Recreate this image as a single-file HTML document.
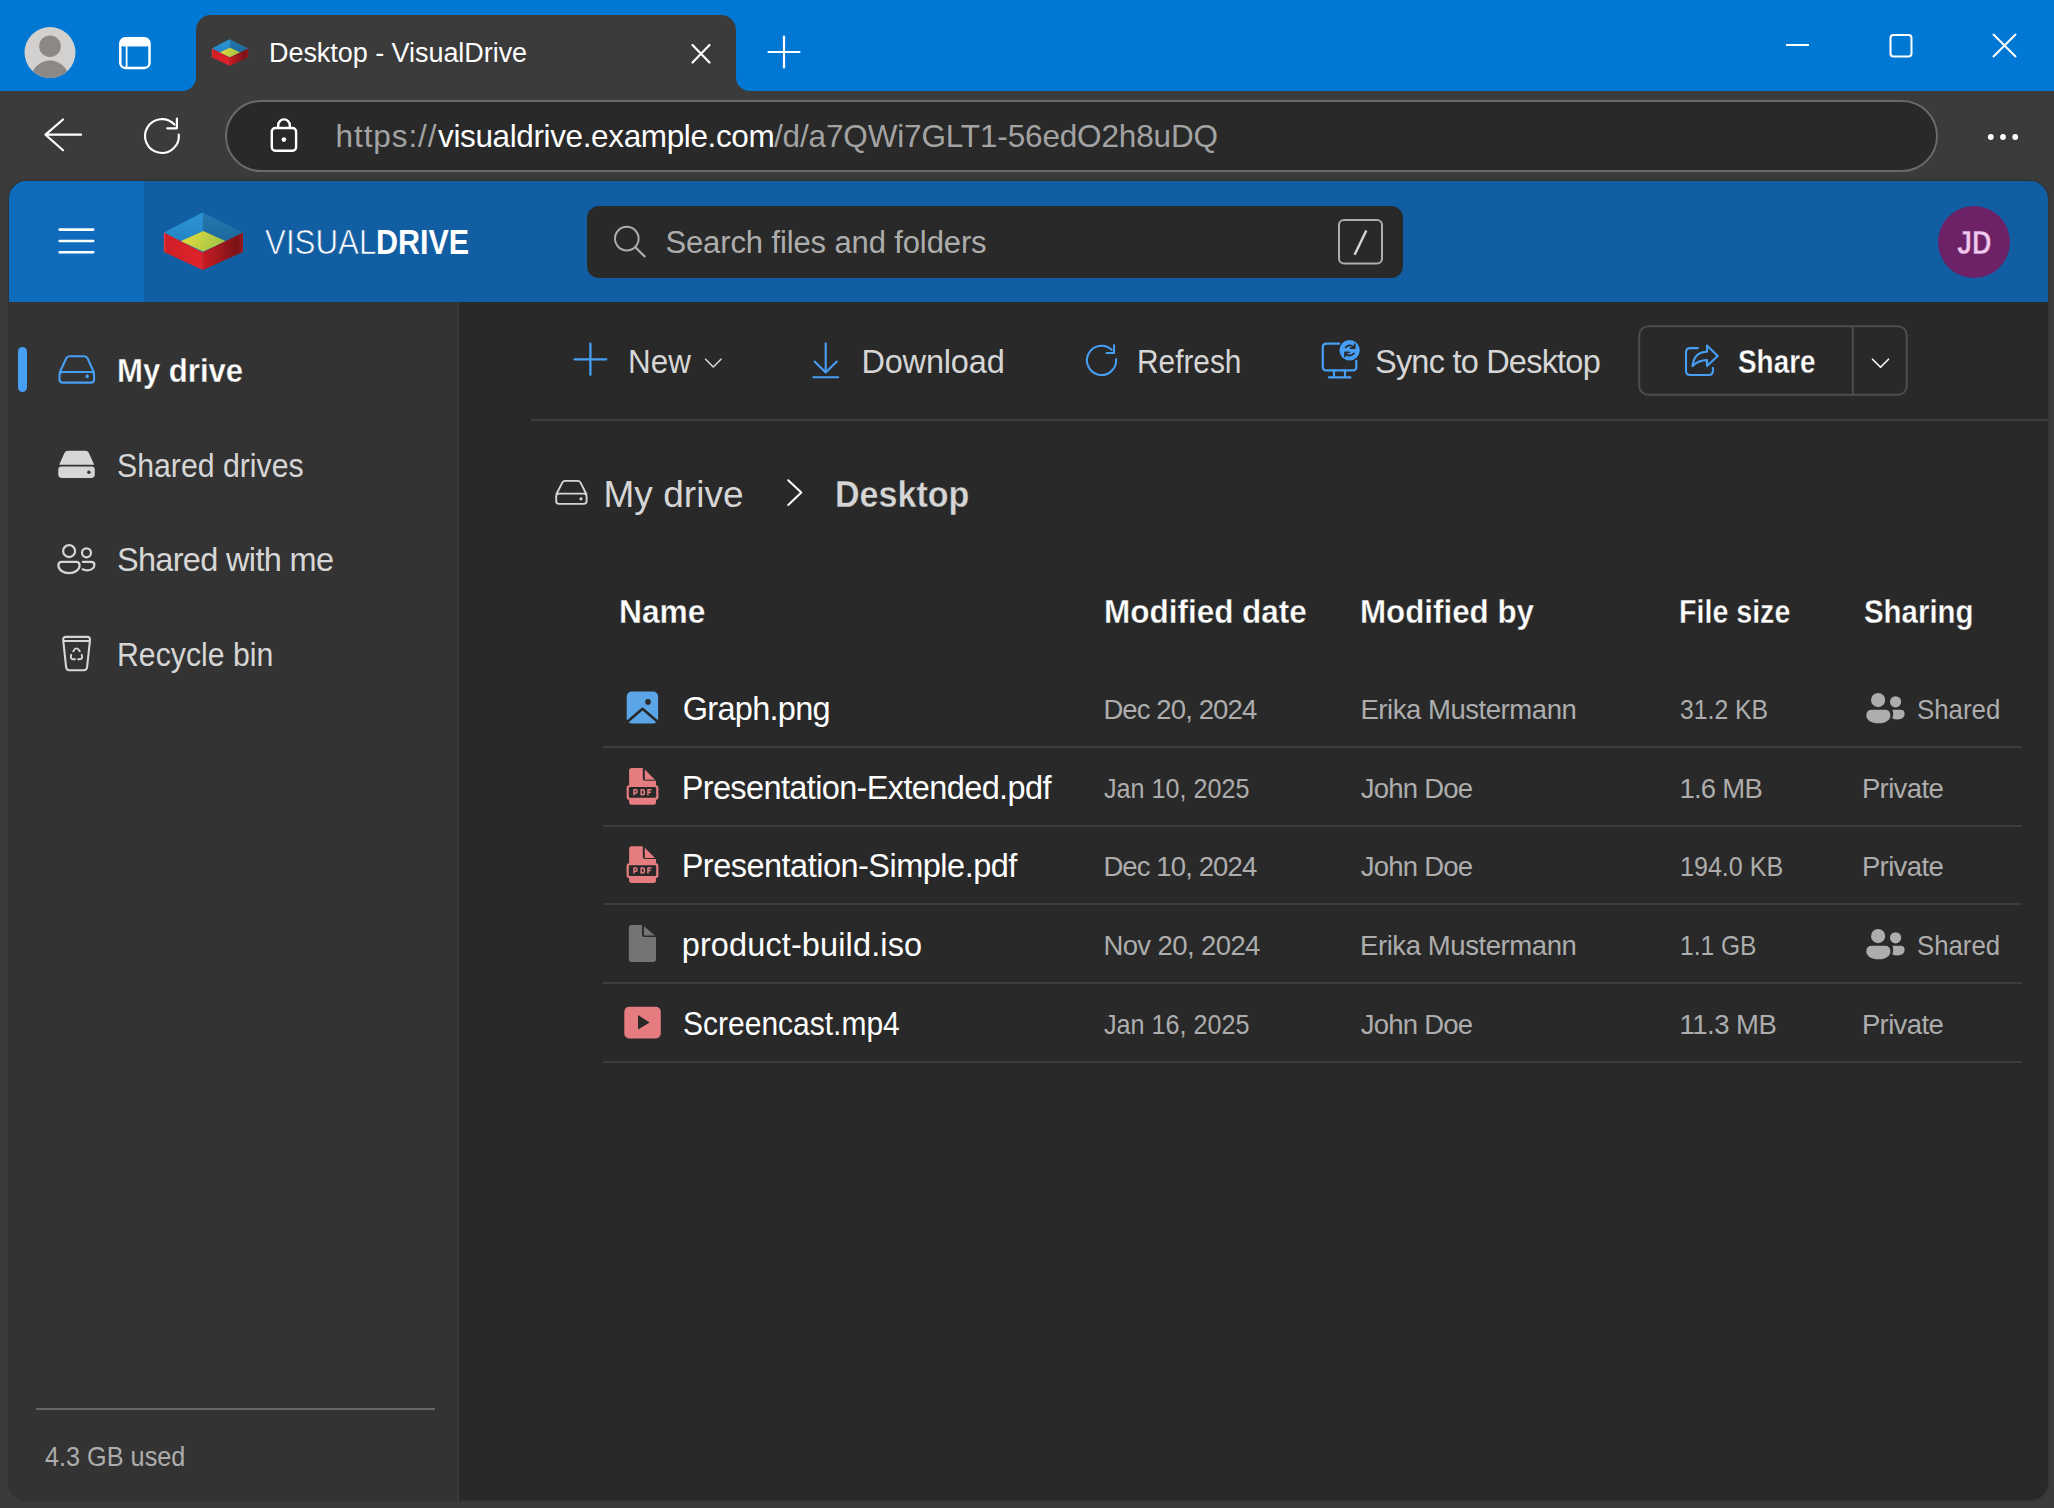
<!DOCTYPE html>
<html><head><meta charset="utf-8"><title>Desktop - VisualDrive</title><style>
html,body{margin:0;padding:0;width:2054px;height:1508px;overflow:hidden;background:#3b3b3b;font-family:"Liberation Sans",sans-serif;}
.b{position:absolute;}
.t{position:absolute;white-space:pre;font-family:"Liberation Sans",sans-serif;transform-origin:0 0;}
svg.ic{position:absolute;left:0;top:0;}
</style></head><body>
<div class=b style="left:0;top:0;width:2054px;height:91px;background:#0078d4"></div>
<div class=b style="left:196px;top:15px;width:540px;height:76px;background:#3b3b3b;border-radius:15px 15px 0 0"></div>
<div class=b style="left:182px;top:77px;width:14px;height:14px;background:radial-gradient(circle at 0 0,#0078d4 13.6px,#3b3b3b 14.4px)"></div>
<div class=b style="left:736px;top:77px;width:14px;height:14px;background:radial-gradient(circle at 100% 0,#0078d4 13.6px,#3b3b3b 14.4px)"></div>
<div class=b style="left:225px;top:100px;width:1713px;height:72px;box-sizing:border-box;border:2px solid #6a6a6a;border-radius:36px;background:#292929"></div>
<div class=b style="left:9px;top:181px;width:2038.5px;height:1319px;border-radius:18px;background:#292929;box-shadow:0 0 3px rgba(0,0,0,0.35)"></div>
<div class=b style="left:9px;top:181px;width:2038.5px;height:121px;border-radius:18px 18px 0 0;background:#115ea3"></div>
<div class=b style="left:9px;top:181px;width:135px;height:121px;border-radius:18px 0 0 0;background:#0f6cbd"></div>
<div class=b style="left:9px;top:302px;width:447.7px;height:1198px;border-radius:0 0 0 18px;background:#333333"></div>
<div class=b style="left:456.7px;top:302px;width:2.2px;height:1198px;background:#3b3b3b"></div>
<div class=b style="left:587px;top:206px;width:816px;height:72px;border-radius:12px;background:#292929"></div>
<div class=b style="left:1938px;top:206px;width:72px;height:72px;border-radius:50%;background:#6d2166"></div>
<div class=b style="left:18px;top:347px;width:9px;height:45px;border-radius:4.5px;background:#479ef5"></div>
<div class=b style="left:36px;top:1408px;width:399px;height:2px;background:#666666"></div>
<div class=b style="left:531px;top:419px;width:1516.5px;height:2px;background:#3d3d3d"></div>
<div class=b style="left:603px;top:745.5px;width:1419px;height:2px;background:#3d3d3d"></div>
<div class=b style="left:603px;top:824.5px;width:1419px;height:2px;background:#3d3d3d"></div>
<div class=b style="left:603px;top:903px;width:1419px;height:2px;background:#3d3d3d"></div>
<div class=b style="left:603px;top:981.5px;width:1419px;height:2px;background:#3d3d3d"></div>
<div class=b style="left:603px;top:1060.5px;width:1419px;height:2px;background:#3d3d3d"></div>
<svg class=ic width="2054" height="1508" viewBox="0 0 2054 1508">
<defs>
<clipPath id="avc"><circle cx="50" cy="52.5" r="25.5"/></clipPath>
<linearGradient id="gy" x1="0" y1="0" x2="1" y2="0.3"><stop offset="0" stop-color="#ecdf3a"/><stop offset="1" stop-color="#a2c448"/></linearGradient>
<linearGradient id="grr" x1="0" y1="0" x2="1" y2="0"><stop offset="0" stop-color="#c81c23"/><stop offset="0.85" stop-color="#7a1317"/><stop offset="1" stop-color="#9a1a1e"/></linearGradient>
<linearGradient id="grl" x1="0" y1="0" x2="1" y2="0"><stop offset="0" stop-color="#e84048"/><stop offset="0.06" stop-color="#d01f27"/><stop offset="1" stop-color="#e0222a"/></linearGradient>
<linearGradient id="gbl" x1="0" y1="0" x2="0" y2="1"><stop offset="0" stop-color="#2c95d6"/><stop offset="1" stop-color="#1f7fbe"/></linearGradient>
<linearGradient id="gbr" x1="0" y1="0" x2="0" y2="1"><stop offset="0" stop-color="#2479b0"/><stop offset="1" stop-color="#1a6294"/></linearGradient>

</defs>
<!-- profile avatar -->
<circle cx="50" cy="52.5" r="25.5" fill="#d3d1cf"/>
<g clip-path="url(#avc)"><circle cx="50" cy="46.2" r="10.8" fill="#8c8885"/><ellipse cx="50" cy="79" rx="19" ry="18.5" fill="#8c8885"/></g>
<!-- tab actions -->
<rect x="120.3" y="38.3" width="29.2" height="29.6" rx="5" fill="none" stroke="#fff" stroke-width="2.5"/>
<rect x="120.3" y="38.3" width="29.2" height="8" rx="4" fill="#fff"/>
<rect x="120.3" y="42" width="29.2" height="4.3" fill="#fff"/>
<line x1="126.6" y1="46" x2="126.6" y2="67" stroke="#fff" stroke-width="1.8"/>
<!-- favicon -->
<g transform="translate(211.9,39.3) scale(0.458)">
<polygon points="0,20 39,0 79.2,20 39,39.9" fill="url(#gbr)"/>
<polygon points="0,20 39,0 39,39.9" fill="url(#gbl)"/>
<polygon points="16.9,28.8 39.5,18.5 62,28.8 39.5,39" fill="url(#gy)"/>
<polygon points="0,20 39,39.9 39,57.5 0,39.5" fill="url(#grl)"/>
<polygon points="39,39.9 79.2,20 79.2,39.5 39,57.5" fill="url(#grr)"/>
</g>
<!-- tab close -->
<path d="M692.5,45 L709.5,62.5 M709.5,45 L692.5,62.5" stroke="#fff" stroke-width="2.2" stroke-linecap="round"/>
<!-- new tab -->
<path d="M768.5,52 L799.5,52 M784,36.5 L784,67.5" stroke="#fff" stroke-width="2.2" stroke-linecap="round"/>
<!-- window controls -->
<line x1="1786" y1="45" x2="1809" y2="45" stroke="#fff" stroke-width="2"/>
<rect x="1890.5" y="35" width="21" height="21.5" rx="3" fill="none" stroke="#fff" stroke-width="2"/>
<path d="M1993.5,34.5 L2015.5,56.5 M2015.5,34.5 L1993.5,56.5" stroke="#fff" stroke-width="2" stroke-linecap="round"/>
<!-- back -->
<path d="M63,119.5 L45.5,134.7 L63,150.2 M45.5,134.7 L81,134.7" fill="none" stroke="#fff" stroke-width="2.2" stroke-linecap="round" stroke-linejoin="round"/>
<!-- browser refresh -->
<path d="M178.8,134.6 A16.9,16.9 0 1 1 174.4,124.6" fill="none" stroke="#fff" stroke-width="2.2" stroke-linecap="round"/>
<path d="M176.9,118.6 L176.9,128.3 L167.2,128.3" fill="none" stroke="#fff" stroke-width="2.2" stroke-linecap="round" stroke-linejoin="round"/>
<!-- lock -->
<rect x="271.8" y="128" width="24.3" height="22.7" rx="3.5" fill="none" stroke="#fff" stroke-width="2.4"/>
<path d="M278.2,128 L278.2,125.2 A5.8,5.8 0 0 1 289.8,125.2 L289.8,128" fill="none" stroke="#fff" stroke-width="2.4"/>
<circle cx="283.9" cy="139.6" r="2.3" fill="#fff"/>
<!-- more dots -->
<circle cx="1990.8" cy="137" r="2.9" fill="#fff"/><circle cx="2003" cy="137" r="2.9" fill="#fff"/><circle cx="2015.2" cy="137" r="2.9" fill="#fff"/>
<!-- hamburger -->
<path d="M59.7,229.6 L93.2,229.6 M59.7,241 L93.2,241 M59.7,252.3 L93.2,252.3" stroke="#fff" stroke-width="2.6" stroke-linecap="round"/>
<!-- header logo -->
<g transform="translate(163.8,212.5)">
<polygon points="0,20 39,0 79.2,20 39,39.9" fill="url(#gbr)"/>
<polygon points="0,20 39,0 39,39.9" fill="url(#gbl)"/>
<polygon points="16.9,28.8 39.5,18.5 62,28.8 39.5,39" fill="url(#gy)"/>
<polygon points="0,20 39,39.9 39,57.5 0,39.5" fill="url(#grl)"/>
<polygon points="39,39.9 79.2,20 79.2,39.5 39,57.5" fill="url(#grr)"/>
</g>
<!-- search icon -->
<circle cx="626.8" cy="238.6" r="11.8" fill="none" stroke="#adadad" stroke-width="2"/>
<line x1="635.3" y1="247.3" x2="644.6" y2="256.4" stroke="#adadad" stroke-width="2.2" stroke-linecap="round"/>
<!-- key box -->
<rect x="1339" y="220" width="43" height="43.5" rx="5" fill="none" stroke="#adadad" stroke-width="2"/>
<line x1="1366.3" y1="230.5" x2="1354.6" y2="254.8" stroke="#d6d6d6" stroke-width="2.4"/>
<!-- sidebar: my drive (blue outline) -->
<path d="M59.4,373 L66.3,358.3 Q67.3,356.2 69.6,356.2 L84.2,356.2 Q86.5,356.2 87.5,358.3 L94.2,373 M62.6,372 L91,372 Q94.1,372 94.1,375.1 L94.1,379.5 Q94.1,382.6 91,382.6 L62.6,382.6 Q59.5,382.6 59.5,379.5 L59.5,375.1 Q59.5,372 62.6,372 Z" fill="none" stroke="#479ef5" stroke-width="2.1" stroke-linejoin="round"/>
<circle cx="87.2" cy="376.4" r="1.8" fill="#479ef5"/>
<!-- shared drives (filled) -->
<path d="M59.2,464.8 L64.3,453.2 Q65.3,450.8 68,450.8 L85.3,450.8 Q88,450.8 89,453.2 L94.2,464.8 Z" fill="#d6d6d6"/>
<rect x="58.3" y="466.6" width="36.5" height="11.3" rx="3.3" fill="#d6d6d6"/>
<circle cx="88.9" cy="472.3" r="1.7" fill="#333333"/>
<!-- shared with me -->
<circle cx="69.1" cy="551.1" r="6" fill="none" stroke="#d6d6d6" stroke-width="2.2"/>
<circle cx="86.5" cy="552.8" r="4.5" fill="none" stroke="#d6d6d6" stroke-width="2.2"/>
<path d="M61.8,561.8 L76.2,561.8 Q79.6,561.8 79.6,565.2 C79.6,570 74.5,573.2 69,573.2 C63.5,573.2 58.4,570 58.4,565.2 Q58.4,561.8 61.8,561.8 Z" fill="none" stroke="#d6d6d6" stroke-width="2.2" stroke-linejoin="round"/>
<path d="M82.8,561.8 L91.2,561.8 Q94.4,561.8 94.4,564.8 C94.4,568.5 90.8,570.3 86.8,570.3 C85.2,570.3 83.8,569.9 82.6,569.3" fill="none" stroke="#d6d6d6" stroke-width="2.2" stroke-linecap="round" stroke-linejoin="round"/>
<!-- recycle bin -->
<path d="M65.9,636.9 L87.3,636.9 Q90.3,636.9 90,640.2 L87.1,667 Q86.8,670.3 83.7,670.3 L69.5,670.3 Q66.4,670.3 66.1,667 L63.2,640.2 Q62.9,636.9 65.9,636.9 Z M63.4,641 L89.7,641" fill="none" stroke="#d6d6d6" stroke-width="2.1" stroke-linejoin="round"/>
<path d="M73.3,651.3 Q76.4,645.5 79.8,651.3 M71.2,654.8 Q70,659.3 73.2,659.3 L75,659.3 M81.7,654.8 Q83,659.3 79.8,659.3 L78.1,659.3" fill="none" stroke="#d6d6d6" stroke-width="1.9" stroke-linecap="round"/>
<!-- toolbar: plus -->
<path d="M574.6,359.3 L606.2,359.3 M590.4,343.7 L590.4,374.8" stroke="#479ef5" stroke-width="2.3" stroke-linecap="round"/>
<path d="M705.6,359.2 L713.3,367 L721,359.2" fill="none" stroke="#d6d6d6" stroke-width="1.6" stroke-linecap="round" stroke-linejoin="round"/>
<!-- download -->
<path d="M825.7,343.3 L825.7,372.5 M814.6,361.5 L825.7,372.6 L836.8,361.5 M813.3,377.2 L838.2,377.2" fill="none" stroke="#479ef5" stroke-width="2.1" stroke-linecap="round" stroke-linejoin="round"/>
<!-- refresh -->
<path d="M1116.1,359.4 A14.6,14.6 0 1 1 1111.6,349.8" fill="none" stroke="#479ef5" stroke-width="2.1" stroke-linecap="round"/>
<path d="M1114,345.4 L1114,353 L1106.6,353" fill="none" stroke="#479ef5" stroke-width="2.1" stroke-linecap="round" stroke-linejoin="round"/>
<!-- sync -->
<path d="M1339.2,343.6 L1326.5,343.6 Q1322.8,343.6 1322.8,347.3 L1322.8,366.7 Q1322.8,370.4 1326.5,370.4 L1352.6,370.4 Q1356.3,370.4 1356.3,366.7 L1356.3,360.8" fill="none" stroke="#479ef5" stroke-width="2.2" stroke-linecap="round"/>
<path d="M1334,370.4 L1334,377.4 M1345,370.4 L1345,377.4 M1329,377.4 L1350.4,377.4" fill="none" stroke="#479ef5" stroke-width="2.2" stroke-linecap="round"/>
<circle cx="1349.6" cy="350.3" r="10.2" fill="#479ef5"/>
<path d="M1345.6,347.3 Q1349.5,343.6 1353.6,346.8 M1354.7,344.2 L1354.7,348.2 L1350.6,348.2 M1354,353.4 Q1350,357.2 1346,354.2 M1345,352.4 L1345,356.5 M1345,352.4 L1349.1,352.4" fill="none" stroke="#292929" stroke-width="1.7" stroke-linecap="round" stroke-linejoin="round"/>
<!-- share button -->
<rect x="1639.2" y="326.2" width="267.6" height="68.6" rx="9" fill="none" stroke="#4d4d4d" stroke-width="2"/>
<line x1="1852.8" y1="326.2" x2="1852.8" y2="394.8" stroke="#4d4d4d" stroke-width="2"/>
<path d="M1697.8,348.1 L1690.2,348.1 Q1686,348.1 1686,352.3 L1686,370.8 Q1686,375 1690.2,375 L1708.7,375 Q1712.9,375 1712.9,370.8 L1712.9,367.9" fill="none" stroke="#479ef5" stroke-width="2.1" stroke-linecap="round"/>
<path d="M1707,345.6 L1717.7,355.9 L1707,365.9 L1707,360.1 C1700.5,360.1 1696.5,362 1692.5,365.9 C1693.5,357 1698.5,351.8 1707,351.7 Z" fill="none" stroke="#479ef5" stroke-width="2.1" stroke-linejoin="round"/>
<path d="M1872.5,359.2 L1880.5,367.2 L1888.5,359.2" fill="none" stroke="#ffffff" stroke-width="1.6" stroke-linecap="round" stroke-linejoin="round"/>
<!-- breadcrumb drive -->
<path d="M556.2,494.5 L562.3,482.6 Q563.2,480.9 565.2,480.9 L577.6,480.9 Q579.6,480.9 580.5,482.6 L586.6,494.5 M559,493.6 L583.8,493.6 Q586.6,493.6 586.6,496.4 L586.6,501.1 Q586.6,503.9 583.8,503.9 L559,503.9 Q556.2,503.9 556.2,501.1 L556.2,496.4 Q556.2,493.6 559,493.6 Z" fill="none" stroke="#d6d6d6" stroke-width="1.9" stroke-linejoin="round"/>
<circle cx="581" cy="498.8" r="1.6" fill="#d6d6d6"/>
<path d="M788.2,480.3 L801.3,492.6 L788.2,505" fill="none" stroke="#ffffff" stroke-width="2" stroke-linecap="round" stroke-linejoin="round"/>
<!-- image icon -->
<rect x="626.7" y="691.6" width="31.4" height="31.9" rx="5" fill="#59a5e6"/>
<circle cx="648" cy="701.9" r="2.8" fill="#292929"/>
<path d="M626.5,722.6 L642.5,708.8 L658.3,722.3" fill="none" stroke="#292929" stroke-width="2.6" stroke-linejoin="round"/>
<!-- pdf icons -->
<g>
<path d="M631.6,768.1 L642.8,768.1 L642.8,778.3 Q642.8,780.8 645.3,780.8 L656,780.8 L656,784.9 L629.1,784.9 L629.1,770.6 Q629.1,768.1 631.6,768.1 Z" fill="#e57c80"/>
<polygon points="644.8,769.5 655,779.8 644.8,779.8" fill="#e57c80"/>
<path d="M629.1,799.9 L656,799.9 L656,802.2 Q656,804.7 653.5,804.7 L631.6,804.7 Q629.1,804.7 629.1,802.2 Z" fill="#e57c80"/>
<rect x="627.7" y="786" width="29.6" height="12.9" rx="2.2" fill="none" stroke="#e57c80" stroke-width="2.2"/>
<path d="M634,794.85 L634,789.75 L636,789.75 Q637.05,789.75 637.05,791.45 Q637.05,793.15 636,793.15 L634,793.15 M641.15,789.75 L642.5,789.75 Q644.45,789.75 644.45,792.3 Q644.45,794.85 642.5,794.85 L641.15,794.85 Z M647.95,794.85 L647.95,789.75 L650.95,789.75 M647.95,792.3 L650.4,792.3" fill="none" stroke="#e57c80" stroke-width="1.5" stroke-linecap="round" stroke-linejoin="round"/>
</g>
<g transform="translate(0,78.2)">
<path d="M631.6,768.1 L642.8,768.1 L642.8,778.3 Q642.8,780.8 645.3,780.8 L656,780.8 L656,784.9 L629.1,784.9 L629.1,770.6 Q629.1,768.1 631.6,768.1 Z" fill="#e57c80"/>
<polygon points="644.8,769.5 655,779.8 644.8,779.8" fill="#e57c80"/>
<path d="M629.1,799.9 L656,799.9 L656,802.2 Q656,804.7 653.5,804.7 L631.6,804.7 Q629.1,804.7 629.1,802.2 Z" fill="#e57c80"/>
<rect x="627.7" y="786" width="29.6" height="12.9" rx="2.2" fill="none" stroke="#e57c80" stroke-width="2.2"/>
<path d="M634,794.85 L634,789.75 L636,789.75 Q637.05,789.75 637.05,791.45 Q637.05,793.15 636,793.15 L634,793.15 M641.15,789.75 L642.5,789.75 Q644.45,789.75 644.45,792.3 Q644.45,794.85 642.5,794.85 L641.15,794.85 Z M647.95,794.85 L647.95,789.75 L650.95,789.75 M647.95,792.3 L650.4,792.3" fill="none" stroke="#e57c80" stroke-width="1.5" stroke-linecap="round" stroke-linejoin="round"/>
</g>
<!-- file icon -->
<path d="M631.3,925 L642,925 L642,934.5 Q642,937 644.5,937 L656,937 L656,959.3 Q656,961.9 653.4,961.9 L631.4,961.9 Q628.8,961.9 628.8,959.3 L628.8,927.5 Q628.8,925 631.3,925 Z" fill="#747474"/>
<polygon points="644,926.3 655,935.5 644,935.5" fill="#747474"/>
<!-- video icon -->
<rect x="624.3" y="1006.7" width="36.5" height="31.7" rx="5" fill="#e57c80"/>
<polygon points="638,1015 649.7,1022.4 638,1029.6" fill="#292929"/>
<!-- people icons -->
<g fill="#adadad">
<circle cx="1878.1" cy="700.1" r="7.1"/>
<path d="M1866.3,715.4 Q1866.3,709.8 1872,709.8 L1885,709.8 Q1890.4,709.8 1890.4,715.4 C1890.4,720.5 1885,723.3 1878.3,723.3 C1871.5,723.3 1866.3,720.5 1866.3,715 Z"/>
<circle cx="1895.6" cy="701.8" r="5.6"/>
<path d="M1892.4,709.7 L1900.6,709.7 Q1904.6,709.7 1904.6,713.7 C1904.6,717.5 1901.5,719.4 1897.5,719.4 C1895.5,719.4 1893.8,719 1892.2,718.2 C1892.9,717 1893.2,715.8 1893.2,714.3 C1893.2,712.5 1892.9,711 1892.4,709.7 Z"/>
</g>
<g fill="#adadad" transform="translate(0,236)">
<circle cx="1878.1" cy="700.1" r="7.1"/>
<path d="M1866.3,715.4 Q1866.3,709.8 1872,709.8 L1885,709.8 Q1890.4,709.8 1890.4,715.4 C1890.4,720.5 1885,723.3 1878.3,723.3 C1871.5,723.3 1866.3,720.5 1866.3,715 Z"/>
<circle cx="1895.6" cy="701.8" r="5.6"/>
<path d="M1892.4,709.7 L1900.6,709.7 Q1904.6,709.7 1904.6,713.7 C1904.6,717.5 1901.5,719.4 1897.5,719.4 C1895.5,719.4 1893.8,719 1892.2,718.2 C1892.9,717 1893.2,715.8 1893.2,714.3 C1893.2,712.5 1892.9,711 1892.4,709.7 Z"/>
</g>
</svg>

<span class=t style="left:269px;top:40px;font-size:27px;line-height:27px;font-weight:400;color:#ffffff;letter-spacing:-0.05px;">Desktop - VisualDrive</span>
<span class=t style="left:335.5px;top:121px;font-size:31.5px;line-height:31.5px;font-weight:400;color:#a3a3a3;letter-spacing:0.93px;">https://</span>
<span class=t style="left:438px;top:121px;font-size:31.5px;line-height:31.5px;font-weight:400;color:#ffffff;letter-spacing:-0.37px;">visualdrive.example.com</span>
<span class=t style="left:774px;top:121px;font-size:31.5px;line-height:31.5px;font-weight:400;color:#a3a3a3;letter-spacing:-0.15px;">/d/a7QWi7GLT1-56edO2h8uDQ</span>
<span class=t style="left:265px;top:224px;font-size:35px;line-height:35px;font-weight:400;color:#ffffff;transform:scaleX(0.8949);-webkit-text-stroke:0.7px #115ea3;">VISUAL</span>
<span class=t style="left:376.06px;top:224px;font-size:35px;line-height:35px;font-weight:700;color:#ffffff;transform:scaleX(0.8705);">DRIVE</span>
<span class=t style="left:665.4px;top:227px;font-size:31px;line-height:31px;font-weight:400;color:#adadad;letter-spacing:-0.12px;">Search files and folders</span>
<span class=t style="left:1956.8px;top:227px;font-size:32.5px;line-height:32.5px;font-weight:700;color:#f1c7ef;transform:scaleX(0.8326);-webkit-text-stroke:0.4px #6d2166;">JD</span>
<span class=t style="left:116.79px;top:355px;font-size:32.5px;line-height:32.5px;font-weight:700;color:#ffffff;transform:scaleX(0.9567);-webkit-text-stroke:0.35px #333333;">My drive</span>
<span class=t style="left:117.17px;top:450px;font-size:32.5px;line-height:32.5px;font-weight:400;color:#d6d6d6;transform:scaleX(0.9309);">Shared drives</span>
<span class=t style="left:116.9px;top:544px;font-size:32.5px;line-height:32.5px;font-weight:400;color:#d6d6d6;letter-spacing:-0.67px;">Shared with me</span>
<span class=t style="left:116.84px;top:639px;font-size:32.5px;line-height:32.5px;font-weight:400;color:#d6d6d6;transform:scaleX(0.9310);">Recycle bin</span>
<span class=t style="left:44.8px;top:1443px;font-size:27.5px;line-height:27.5px;font-weight:400;color:#adadad;transform:scaleX(0.9183);">4.3 GB used</span>
<span class=t style="left:627.67px;top:346px;font-size:32.5px;line-height:32.5px;font-weight:400;color:#d6d6d6;transform:scaleX(0.9662);">New</span>
<span class=t style="left:861.4px;top:346px;font-size:32.5px;line-height:32.5px;font-weight:400;color:#d6d6d6;letter-spacing:-0.17px;">Download</span>
<span class=t style="left:1137.46px;top:346px;font-size:32.5px;line-height:32.5px;font-weight:400;color:#d6d6d6;transform:scaleX(0.9178);">Refresh</span>
<span class=t style="left:1375px;top:346px;font-size:32.5px;line-height:32.5px;font-weight:400;color:#d6d6d6;letter-spacing:-0.78px;">Sync to Desktop</span>
<span class=t style="left:1737.6px;top:346px;font-size:32.5px;line-height:32.5px;font-weight:700;color:#ffffff;transform:scaleX(0.8582);-webkit-text-stroke:0.35px #292929;">Share</span>
<span class=t style="left:603.5px;top:476px;font-size:37px;line-height:37px;font-weight:400;color:#d6d6d6;letter-spacing:0.04px;">My drive</span>
<span class=t style="left:834.86px;top:476px;font-size:37px;line-height:37px;font-weight:700;color:#d6d6d6;transform:scaleX(0.9207);-webkit-text-stroke:0.35px #292929;">Desktop</span>
<span class=t style="left:619.08px;top:595px;font-size:33px;line-height:33px;font-weight:700;color:#ffffff;transform:scaleX(0.9620);-webkit-text-stroke:0.35px #292929;">Name</span>
<span class=t style="left:1103.69px;top:595px;font-size:33px;line-height:33px;font-weight:700;color:#ffffff;transform:scaleX(0.9538);-webkit-text-stroke:0.35px #292929;">Modified date</span>
<span class=t style="left:1360.4px;top:595px;font-size:33px;line-height:33px;font-weight:700;color:#ffffff;transform:scaleX(0.9491);-webkit-text-stroke:0.35px #292929;">Modified by</span>
<span class=t style="left:1678.97px;top:595px;font-size:33px;line-height:33px;font-weight:700;color:#ffffff;transform:scaleX(0.8672);-webkit-text-stroke:0.35px #292929;">File size</span>
<span class=t style="left:1863.6px;top:595px;font-size:33px;line-height:33px;font-weight:700;color:#ffffff;transform:scaleX(0.8915);-webkit-text-stroke:0.35px #292929;">Sharing</span>
<span class=t style="left:682.7px;top:693px;font-size:32.5px;line-height:32.5px;font-weight:400;color:#ffffff;letter-spacing:-0.7px;">Graph.png</span>
<span class=t style="left:1103.4px;top:696px;font-size:27.5px;line-height:27.5px;font-weight:400;color:#adadad;letter-spacing:-0.89px;">Dec 20, 2024</span>
<span class=t style="left:1360.4px;top:696px;font-size:27.5px;line-height:27.5px;font-weight:400;color:#adadad;letter-spacing:-0.45px;">Erika Mustermann</span>
<span class=t style="left:1679.6px;top:696px;font-size:27.5px;line-height:27.5px;font-weight:400;color:#adadad;transform:scaleX(0.9005);">31.2 KB</span>
<span class=t style="left:1916.56px;top:696px;font-size:27.5px;line-height:27.5px;font-weight:400;color:#adadad;transform:scaleX(0.9388);">Shared</span>
<span class=t style="left:681.7px;top:772px;font-size:32.5px;line-height:32.5px;font-weight:400;color:#ffffff;letter-spacing:-0.63px;">Presentation-Extended.pdf</span>
<span class=t style="left:1104.2px;top:775px;font-size:27.5px;line-height:27.5px;font-weight:400;color:#adadad;transform:scaleX(0.9148);">Jan 10, 2025</span>
<span class=t style="left:1360.7px;top:775px;font-size:27.5px;line-height:27.5px;font-weight:400;color:#adadad;letter-spacing:-0.75px;">John Doe</span>
<span class=t style="left:1679.5px;top:775px;font-size:27.5px;line-height:27.5px;font-weight:400;color:#adadad;letter-spacing:-0.78px;">1.6 MB</span>
<span class=t style="left:1861.9px;top:775px;font-size:27.5px;line-height:27.5px;font-weight:400;color:#adadad;letter-spacing:-0.63px;">Private</span>
<span class=t style="left:681.7px;top:850px;font-size:32.5px;line-height:32.5px;font-weight:400;color:#ffffff;letter-spacing:-0.51px;">Presentation-Simple.pdf</span>
<span class=t style="left:1103.4px;top:853px;font-size:27.5px;line-height:27.5px;font-weight:400;color:#adadad;letter-spacing:-0.89px;">Dec 10, 2024</span>
<span class=t style="left:1360.7px;top:853px;font-size:27.5px;line-height:27.5px;font-weight:400;color:#adadad;letter-spacing:-0.75px;">John Doe</span>
<span class=t style="left:1679.67px;top:853px;font-size:27.5px;line-height:27.5px;font-weight:400;color:#adadad;transform:scaleX(0.9126);">194.0 KB</span>
<span class=t style="left:1861.9px;top:853px;font-size:27.5px;line-height:27.5px;font-weight:400;color:#adadad;letter-spacing:-0.63px;">Private</span>
<span class=t style="left:681.7px;top:929px;font-size:32.5px;line-height:32.5px;font-weight:400;color:#ffffff;letter-spacing:0.12px;">product-build.iso</span>
<span class=t style="left:1103.4px;top:932px;font-size:27.5px;line-height:27.5px;font-weight:400;color:#adadad;letter-spacing:-0.6px;">Nov 20, 2024</span>
<span class=t style="left:1360px;top:932px;font-size:27.5px;line-height:27.5px;font-weight:400;color:#adadad;letter-spacing:-0.42px;">Erika Mustermann</span>
<span class=t style="left:1679.71px;top:932px;font-size:27.5px;line-height:27.5px;font-weight:400;color:#adadad;transform:scaleX(0.8935);">1.1 GB</span>
<span class=t style="left:1916.66px;top:932px;font-size:27.5px;line-height:27.5px;font-weight:400;color:#adadad;transform:scaleX(0.9365);">Shared</span>
<span class=t style="left:682.78px;top:1008px;font-size:32.5px;line-height:32.5px;font-weight:400;color:#ffffff;transform:scaleX(0.9232);">Screencast.mp4</span>
<span class=t style="left:1104.2px;top:1011px;font-size:27.5px;line-height:27.5px;font-weight:400;color:#adadad;transform:scaleX(0.9148);">Jan 16, 2025</span>
<span class=t style="left:1360.7px;top:1011px;font-size:27.5px;line-height:27.5px;font-weight:400;color:#adadad;letter-spacing:-0.75px;">John Doe</span>
<span class=t style="left:1679.5px;top:1011px;font-size:27.5px;line-height:27.5px;font-weight:400;color:#adadad;letter-spacing:-0.52px;">11.3 MB</span>
<span class=t style="left:1861.9px;top:1011px;font-size:27.5px;line-height:27.5px;font-weight:400;color:#adadad;letter-spacing:-0.63px;">Private</span>
</body></html>
